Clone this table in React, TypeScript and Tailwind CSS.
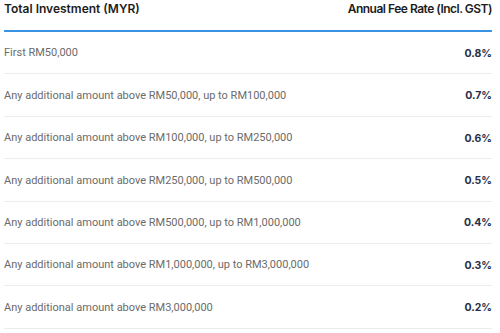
const rows = [
  ["First RM50,000", "0.8%"],
  ["Any additional amount above RM50,000, up to RM100,000", "0.7%"],
  ["Any additional amount above RM100,000, up to RM250,000", "0.6%"],
  ["Any additional amount above RM250,000, up to RM500,000", "0.5%"],
  ["Any additional amount above RM500,000, up to RM1,000,000", "0.4%"],
  ["Any additional amount above RM1,000,000, up to RM3,000,000", "0.3%"],
  ["Any additional amount above RM3,000,000", "0.2%"],
];

export default function App() {
  return (
    <div className="h-[333px] w-[500px] overflow-hidden bg-white pl-[4px] pr-[8px] font-['Inter',sans-serif]">
      <div className="flex h-[32px] items-start justify-between border-b-2 border-[#3a92e4] text-[12px] font-semibold text-[#1c1c1c]">
        <span>Total Investment (MYR)</span>
        <span className="tracking-[-0.5px]">Annual Fee Rate (Incl. GST)</span>
      </div>
      {rows.map(([label, rate]) => (
        <div
          key={label}
          className="flex h-[42.4px] items-center justify-between border-b border-[#ececec] pt-[2px]"
        >
          <span className="font-['Roboto',sans-serif] text-[11px] text-[#6b6b6b]">{label}</span>
          <span className="text-[10.5px] font-bold text-[#24304a]">{rate}</span>
        </div>
      ))}
    </div>
  );
}
